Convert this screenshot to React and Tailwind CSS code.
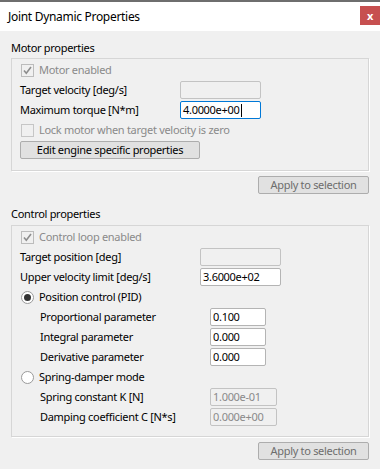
import React from "react";

const font = { fontFamily: '"Noto Sans", "Open Sans", sans-serif' };

function Check({ label }) {
  return (
    <div className="flex items-center h-5">
      <div className="w-[13px] h-[13px] border border-[#bcbcbc] bg-[#f0f0f0] flex items-center justify-center ml-[1px]">
        <svg width="11" height="11" viewBox="0 0 11 11">
          <path d="M2 5.5 L4.3 8.3 L9 2" fill="none" stroke="#8d8d8d" strokeWidth="1.6" />
        </svg>
      </div>
      <span className="ml-[5px] text-[#8a8a8a]">{label}</span>
    </div>
  );
}

function EmptyCheck({ label }) {
  return (
    <div className="flex items-center h-5">
      <div className="w-[13px] h-[13px] border border-[#c6c6c6] bg-[#f0f0f0] ml-[1px]" />
      <span className="ml-[5px] text-[#8a8a8a]">{label}</span>
    </div>
  );
}

function Radio({ label, checked }) {
  return (
    <div className="flex items-center h-5">
      <div className="w-[13px] h-[13px] rounded-full border border-[#9a9a9a] bg-white flex items-center justify-center ml-[1px]">
        {checked && <div className="w-[7px] h-[7px] rounded-full bg-[#333]" />}
      </div>
      <span className="ml-[5px] text-black">{label}</span>
    </div>
  );
}

function Field({ label, labelW, value, w, state, indent }) {
  let cls = "h-[18px] border rounded-[2px] flex items-center px-[2px] ";
  if (state === "disabled") cls += "bg-[#f0f0f0] border-[#c3c3c3] text-[#8a8a8a]";
  else if (state === "focus") cls += "bg-white border-[#0078d7] text-black";
  else cls += "bg-white border-[#b4b4b4] text-black";
  return (
    <div className={"flex items-center h-5 " + (indent ? "pl-[20px]" : "")}>
      <div className={labelW}>{label}</div>
      <div className={cls} style={{ width: w }}>
        <span>{value}</span>
        {state === "focus" && <span className="w-px h-[13px] bg-black ml-px" />}
      </div>
    </div>
  );
}

function Button({ children, className, disabled }) {
  return (
    <div
      className={
        "h-[18px] border border-[#adadad] bg-[#e1e1e1] rounded-[2px] flex items-center justify-center " +
        (disabled ? "text-[#6d6d6d] " : "text-black ") +
        className
      }
    >
      {children}
    </div>
  );
}

export default function App() {
  return (
    <div className="w-[380px] h-[469px] bg-[#f0f0f0] overflow-hidden text-[11px] tracking-[-0.3px] text-black leading-4" style={font}>
      <div className="h-[2px] bg-[#6e6e6e]" />
      <div className="h-[29px] bg-white flex items-center justify-between pl-[8px]">
        <span className="text-[12px] text-black">Joint Dynamic Properties</span>
        <div className="w-[20px] h-[19px] bg-[#c75050] flex items-center justify-center text-white font-bold text-[11px] mt-[-2px]">
          x
        </div>
      </div>

      <div className="px-[11px]">
        <div className="pt-[9px] h-[27px]">Motor properties</div>
        <div className="border border-[#d6d6d6] shadow-[1px_1px_0_#ffffff] pl-[8px] pt-px pb-[11px]">
          <Check label="Motor enabled" />
          <Field label="Target velocity [deg/s]" labelW="w-[160px]" value="" w="81px" state="disabled" />
          <Field label="Maximum torque [N*m]" labelW="w-[160px]" value="4.0000e+00" w="81px" state="focus" />
          <EmptyCheck label="Lock motor when target velocity is zero" />
          <Button className="w-[180px] mt-px">Edit engine specific properties</Button>
        </div>
        <div className="flex justify-end mt-[5px]">
          <Button className="w-[111px]" disabled>Apply to selection</Button>
        </div>

        <div className="pt-[12px] h-[31px]">Control properties</div>
        <div className="border border-[#d6d6d6] shadow-[1px_1px_0_#ffffff] pl-[8px] pt-px pb-[9px]">
          <Check label="Control loop enabled" />
          <Field label="Target position [deg]" labelW="w-[180px]" value="" w="81px" state="disabled" />
          <Field label="Upper velocity limit [deg/s]" labelW="w-[180px]" value="3.6000e+02" w="81px" />
          <Radio label="Position control (PID)" checked />
          <Field indent label="Proportional parameter" labelW="w-[170px]" value="0.100" w="56px" />
          <Field indent label="Integral parameter" labelW="w-[170px]" value="0.000" w="56px" />
          <Field indent label="Derivative parameter" labelW="w-[170px]" value="0.000" w="56px" />
          <Radio label="Spring-damper mode" />
          <Field indent label="Spring constant K [N]" labelW="w-[170px]" value="1.000e-01" w="67px" state="disabled" />
          <Field indent label="Damping coefficient C [N*s]" labelW="w-[170px]" value="0.000e+00" w="67px" state="disabled" />
        </div>
        <div className="flex justify-end mt-[5px]">
          <Button className="w-[111px]" disabled>Apply to selection</Button>
        </div>
      </div>
    </div>
  );
}
